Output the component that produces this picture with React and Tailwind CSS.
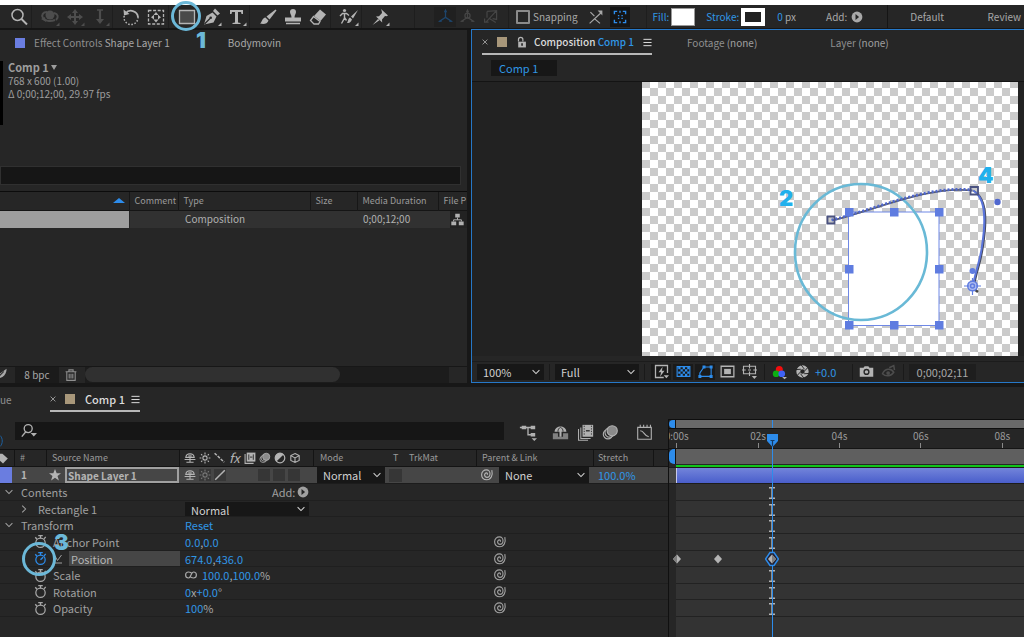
import React from "react";

const blue = "#2d8ceb";

/* ---------- icons ---------- */

function Icon({ size = 20, className = "", children, ...rest }) {
  return (
    <svg
      viewBox="0 0 20 20"
      width={size}
      height={size}
      fill="none"
      stroke="currentColor"
      strokeWidth="1.5"
      aria-hidden="true"
      className={"shrink-0 overflow-visible " + className}
      {...rest}
    >
      {children}
    </svg>
  );
}

const Corner = () => <path d="M19.500 15.500v3.500h-3.500z" fill="currentColor" stroke="none" />;

const ZoomIcon = () => (
  <Icon>
    <circle cx="8.500" cy="8" r="5.500" />
    <path d="M12.500 12l5.500 5.500" strokeWidth="2" />
  </Icon>
);
const OrbitIcon = () => (
  <Icon>
    <circle cx="10" cy="8" r="4.500" fill="currentColor" stroke="none" />
    <path d="M7 5C3 5 1 8 3 11c2 3 7 4 12 2M14 6c4 1 5 4 2 7" strokeWidth="2" />
    <path d="M1 12l5 3-1-5z" fill="currentColor" stroke="none" />
    <Corner />
  </Icon>
);
const PanIcon = () => (
  <Icon>
    <path d="M10 4v12M4 10h12" strokeWidth="2" />
    <path d="M10 2l3 4H7zM10 18l3-4H7zM2 10l4-3v6zM18 10l-4-3v6z" fill="currentColor" stroke="none" />
    <Corner />
  </Icon>
);
const DollyIcon = () => (
  <Icon>
    <path d="M10 3v10" strokeWidth="2.200" />
    <path d="M7 3h6" />
    <path d="M10 17l4-5H6z" fill="currentColor" stroke="none" />
    <Corner />
  </Icon>
);
const RotateIcon = () => (
  <Icon>
    <path d="M4.500 6.500A7 7 0 0 1 17 10" strokeWidth="1.800" />
    <path d="M17 10a7 7 0 1 1-13.500-2" strokeDasharray="1.500 1.700" />
    <path d="M2.500 2.500l.5 6 5.500-1.500z" fill="currentColor" stroke="none" />
  </Icon>
);
const AnchorIcon = () => (
  <Icon>
    <path d="M2.500 3.500h15v13.500h-15z" strokeDasharray="3 1.600" strokeWidth="1.300" />
    <path d="M10 5l2.500 3h-5zM10 15.500l2.500-3h-5zM5 10.200l3-2.400v4.800zM15 10.200l-3-2.400v4.800z" fill="currentColor" stroke="none" />
  </Icon>
);
const RectIcon = () => (
  <Icon>
    <path d="M2.500 3.500h15v13h-15z" fill="#4a4a4a" strokeWidth="1.300" />
    <Corner />
  </Icon>
);
const PenIcon = () => (
  <Icon>
    <path d="M2 17.500L4.500 9l6-3.500 4 4-3 6z" fill="currentColor" stroke="none" />
    <path d="M11 4l2-2.500 5 5-2.500 2z" fill="currentColor" stroke="none" />
    <path d="M2.500 17l5.500-5.500" stroke="#262626" strokeWidth="1.200" />
    <circle cx="8.700" cy="10.800" r="1.300" fill="#262626" stroke="none" />
    <Corner />
  </Icon>
);
const TypeIcon = () => (
  <Icon>
    <path d="M3 3h13v4h-1.500l-.5-2h-3v10.500l2.500.5v1h-8v-1l2.500-.5V5H5l-.5 2H3z" fill="currentColor" stroke="none" />
    <Corner />
  </Icon>
);
const BrushIcon = () => (
  <Icon>
    <path d="M17.500 2.500L8.500 9.500l3 3 7-9z" fill="currentColor" stroke="none" />
    <path d="M7.500 10.500l3 3c-1 3.500-5 4-8.500 3 2-1 2-5.500 5.500-6z" fill="currentColor" stroke="none" />
  </Icon>
);
const StampIcon = () => (
  <Icon>
    <path d="M7 5a3 3 0 1 1 6 0c0 2-1.500 3-1.500 5.500H18v4H2v-4h6.500C8.500 8 7 7 7 5zM3 15.800h14v1.400H3z" fill="currentColor" stroke="none" />
  </Icon>
);
const EraserIcon = () => (
  <Icon>
    <path d="M12 2.500l6 5-5.500 6.500-6.500-5z" fill="currentColor" stroke="none" />
    <path d="M5.500 9.500l6.500 5-1.500 2.500H6l-3.500-3.500z" strokeWidth="1.300" />
  </Icon>
);
const RotoIcon = () => (
  <Icon>
    <path d="M19 3l-7 6.500 2 2zM11 10.500l2 2c-1 3-3 3.500-5 3.500 1-1.500 1-4.500 3-5.500z" fill="currentColor" stroke="none" />
    <circle cx="5.500" cy="3.500" r="1.600" fill="currentColor" stroke="none" />
    <path d="M1 9l2.500-2.500h4l2.500 2M5.500 6.500v4.500l-3 5.500M5.500 10.500l2 3" strokeWidth="1.400" />
    <Corner />
  </Icon>
);
const PinIcon = () => (
  <Icon>
    <path d="M11 2l7 6.500-1.500.8-1.500-.3-3 3.500.2 3L6 9.500l3-.2L12 6l-.3-2zM8 12l1.500 1.300L2.500 18z" fill="currentColor" stroke="none" />
    <Corner />
  </Icon>
);
const AxisIcon = ({ ring }) => (
  <Icon size={17}>
    <path d="M10 3v8l-7 4.500M10 11l7 4.500" />
    <path d="M10 1l2 4H8zM1 16.500l4-3 .8 2.800zM19 16.500l-4-3-.8 2.800z" fill="currentColor" stroke="none" />
    {ring && <circle cx="10" cy="9" r="3" />}
  </Icon>
);
const ViewAxisIcon = () => (
  <Icon size={16}>
    <path d="M5 3l12-1v11l-5-1M16 3L4 16M5 3v8M2 12v4.500h5M8 12l8 5" />
  </Icon>
);
const SnapEdgeIcon = () => (
  <Icon size={16}>
    <path d="M3 4l5 5M2 18L16 5M8 12l7 6" />
    <path d="M12 2h6v6z" fill="currentColor" stroke="none" />
  </Icon>
);
const SnapBoxIcon = () => (
  <Icon size={14}>
    <path d="M2 6V2h4M14 2h4v4M18 14v4h-4M6 18H2v-4M7 8h2M12 8h2M7 12h2M12 12h2M10 1v3M10 16v3" strokeWidth="2" />
  </Icon>
);
const PlayIcon = () => (
  <Icon size={12}>
    <circle cx="10" cy="10" r="9" fill="currentColor" stroke="none" />
    <path d="M7.500 5l6 5-6 5z" fill="#262626" stroke="none" />
  </Icon>
);
const CloseIcon = () => (
  <Icon size={6}>
    <path d="M2 2l16 16M18 2L2 18" strokeWidth="3" />
  </Icon>
);
const MenuIcon = () => (
  <Icon size={9}>
    <path d="M1 3h18M1 10h18M1 17h18" strokeWidth="2.200" />
  </Icon>
);
const LockIcon = () => (
  <Icon size={11}>
    <path d="M4 8.500h14V19H4z" fill="currentColor" stroke="none" />
    <path d="M4.500 8V4.500a4 4 0 0 1 8 0V8" strokeWidth="2.200" />
    <path d="M11 11.500v4.500" stroke="#262626" strokeWidth="3" />
  </Icon>
);
const Chevron = ({ className = "", size = 8 }) => (
  <Icon size={size} className={className}>
    <path d="M1.500 5.500L10 14l8.500-8.500" strokeWidth="2.600" />
  </Icon>
);
const FlowIcon = () => (
  <Icon size={13}>
    <path d="M6.500 1h7v6h-7zM.5 13h7.500v6H.5zM12 13h7.500v6H12z" fill="currentColor" stroke="none" />
    <path d="M10 7v3.500M4 13v-2.500h12V13" />
  </Icon>
);
const FeatherIcon = () => (
  <Icon size={14}>
    <path d="M1 19L4 11 18 1c0 5-2 9-6 12-3 2-6 1-8 2z" fill="currentColor" stroke="none" />
    <path d="M4 15L14 5" stroke="#262626" />
  </Icon>
);
const TrashIcon = () => (
  <Icon size={12}>
    <path d="M1 4.500h18M6.500 4V1.500h7V4M3 5v14h14V5M7 8v8M10 8v8M13 8v8" strokeWidth="1.800" />
  </Icon>
);

/* viewer footer */
const FastIcon = () => (
  <Icon size={15}>
    <path d="M13 18H2V2h16v10" strokeWidth="1.700" />
    <path d="M11.500 3.500L6 11h3.500L8 17l6-8h-3.500zM13 15h7l-3.500 4z" fill="currentColor" stroke="none" />
  </Icon>
);
const GridIcon = () => (
  <Icon size={15}>
    <path d="M1.500 3.500h17v13h-17z" />
    <path d="M3 4h3v3H3zM9 4h3v3H9zM15 4h3v3h-3zM6 7h3v3H6zM12 7h3v3h-3zM3 10h3v3H3zM9 10h3v3H9zM15 10h3v3h-3zM6 13h3v3H6zM12 13h3v3h-3z" fill="currentColor" stroke="none" />
  </Icon>
);
const MaskIcon = () => (
  <Icon size={15}>
    <path d="M2.500 16.500V12L8 4h9.500v12.500z" />
    <path d="M.5 14.500h4v4h-4zM15.500 14.500h4v4h-4zM15.500 2h4v4h-4zM6 2h4v4H6z" fill="currentColor" stroke="none" />
  </Icon>
);
const RoiIcon = () => (
  <Icon size={15}>
    <path d="M1.500 3h17v14h-17z" strokeWidth="1.700" />
    <path d="M5.500 6.500h9v7h-9z" fill="currentColor" stroke="none" />
  </Icon>
);
const GuidesIcon = () => (
  <Icon size={15}>
    <path d="M2 3h16v10H2zM10 0v6M10 10v6M0 8h5M15 8h5M8 8h4" />
    <path d="M13 16h7l-3.500 4z" fill="currentColor" stroke="none" />
  </Icon>
);
const ChannelsIcon = () => (
  <Icon size={14}>
    <g stroke="none">
      <circle cx="9" cy="6.500" r="5" fill="#f20d0d" />
      <circle cx="4.500" cy="12.500" r="4.800" fill="#0cb012" />
      <circle cx="12.500" cy="12.500" r="4.800" fill="#3e62f5" />
      <path d="M13 17h7l-3.500 3.500z" fill="currentColor" />
    </g>
  </Icon>
);
const ApertureIcon = () => (
  <Icon size={13}>
    <circle cx="10" cy="10" r="6.500" strokeWidth="6" />
    <path d="M8 0l5 6.500M18 4l-4.500 5M20 13l-7.500.5M12 20l-5-6.500M2 16l4.500-5M0 7l7.500-.5" stroke="#262626" strokeWidth="1.500" />
  </Icon>
);
const CameraIcon = () => (
  <Icon size={15}>
    <path d="M1 5h5l1.500-2h5L14 5h5v12H1z" fill="currentColor" stroke="none" />
    <circle cx="10" cy="10.500" r="3.200" stroke="#262626" strokeWidth="1.800" />
  </Icon>
);
const ShowSnapIcon = () => (
  <Icon size={15}>
    <path d="M2 13c3-7 11-8 15-2-4 6-11 6-15 2z" strokeWidth="2" />
    <circle cx="9.500" cy="12" r="2.500" fill="currentColor" stroke="none" />
    <path d="M11 5l6-3 1 6" strokeWidth="2" />
  </Icon>
);

/* timeline */
const SearchIcon = () => (
  <Icon size={16}>
    <circle cx="9" cy="7" r="5" strokeWidth="1.700" />
    <path d="M6 11L1 17" strokeWidth="1.700" />
    <path d="M12 12.500h8l-4 4.500z" fill="currentColor" stroke="none" />
  </Icon>
);
const MiniFlowIcon = () => (
  <Icon size={18}>
    <path d="M1 5h10M10 5v8h4M10 5h4" />
    <path d="M3 3h5v4H3zM13 3h5v4h-5zM13 11h5v4h-5zM14 17h6l-3 3z" fill="currentColor" stroke="none" />
  </Icon>
);
const ShyAllIcon = () => (
  <Icon size={17}>
    <path d="M1 11h6v4h6v-4h6v7H1z" fill="#808080" stroke="none" />
    <path d="M3 9c1-8 13-8 14 0zM8.800 9h2.400v6H8.800z" fill="currentColor" stroke="none" />
    <path d="M7 9c0-3 1-4 3-5 2 1 3 2 3 5" stroke="#262626" strokeWidth="1" />
  </Icon>
);
const FramesIcon = () => (
  <Icon size={17}>
    <path d="M6.500 1H19v14H6.500z" fill="currentColor" stroke="none" />
    <path d="M4.500 4v13H16M1.800 6v13H13" strokeWidth="1.200" />
    <path d="M8.500 2v12M17 2v12" stroke="#262626" strokeDasharray="1.500 1.500" strokeWidth="1" />
    <path d="M10.500 8h4.500" stroke="#262626" />
  </Icon>
);
const BlurIcon = ({ size = 17 }) => (
  <Icon size={size}>
    <circle cx="7" cy="12" r="5.500" strokeWidth="1.300" />
    <circle cx="9" cy="10" r="5.500" fill="#262626" strokeWidth="1.300" />
    <circle cx="12" cy="8" r="6" fill="#8a8a8a" strokeWidth="1.300" />
  </Icon>
);
const GraphIcon = () => (
  <Icon size={17}>
    <path d="M2 4h16v14H2zM5 8c5 0 4 6 10 7M5 1v3M9 1v3M13 1v3M17 1v3" strokeWidth="1.300" />
  </Icon>
);
const TagIcon = () => (
  <Icon size={12}>
    <path d="M0 3h9l9 8-8 8L0 10z" fill="currentColor" stroke="none" />
  </Icon>
);
const ShyIcon = () => (
  <Icon size={12}>
    <path d="M3 9C4 1 16 1 17 9zM10 9v9M1 12.500h18M4 17h12" strokeWidth="1.800" />
    <path d="M8.500 9V4M11.500 9V4" strokeWidth="1.800" />
  </Icon>
);
const SunIcon = () => (
  <Icon size={12}>
    <circle cx="10" cy="10" r="3.500" strokeWidth="1.800" />
    <path d="M10 1v3M10 16v3M1 10h3M16 10h3M3.500 3.500l2 2M14.500 14.500l2 2M16.500 3.500l-2 2M3.500 16.500l2-2" strokeWidth="1.800" />
  </Icon>
);
const DashIcon = () => (
  <Icon size={12}>
    <path d="M1 2l16 15" strokeWidth="2.500" strokeDasharray="5 2" />
  </Icon>
);
const SlashIcon = () => (
  <Icon size={12}>
    <path d="M2 18L18 2" strokeWidth="2.500" />
  </Icon>
);
const BlendIcon = () => (
  <Icon size={12}>
    <path d="M4.500 1H19v15H4.500z" fill="currentColor" stroke="none" />
    <path d="M1.800 3.500V19H16" strokeWidth="1.800" />
    <path d="M8 4v9M15.500 4v9M10 8.500h4" stroke="#262626" strokeWidth="1.500" />
  </Icon>
);
const AdjustIcon = () => (
  <Icon size={12}>
    <circle cx="10" cy="10" r="8" strokeWidth="2" />
    <path d="M16 4A8.500 8.500 0 0 0 4 16z" fill="currentColor" stroke="none" />
  </Icon>
);
const CubeIcon = () => (
  <Icon size={12}>
    <path d="M10 2.500l7 3.500v8l-7 3.500L3 14V6zM3 6l7 4 7-4M10 10v7.500" strokeWidth="1.800" />
  </Icon>
);
const StarIcon = () => (
  <Icon size={12}>
    <path d="M10 0l2.800 7H20l-5.800 4.500L16.500 19 10 14.500 3.500 19l2.300-7.500L0 7h7.200z" fill="currentColor" stroke="none" />
  </Icon>
);
const SwirlIcon = () => (
  <Icon size={12}>
    <path d="M18 2c2 8-1 16-8.500 16C4 18 1 14 1 9.500 1 4.500 5 1.500 9 1.500c4 0 6 3 6 6.500 0 3.500-2 6-5 6-2.500 0-4-2-4-4s1.300-3.500 3-3.500 2 1.500 1.500 3" strokeWidth="1.900" />
  </Icon>
);
const StopwatchIcon = ({ on }) => (
  <Icon size={13}>
    <circle cx="10" cy="12" r="7.200" strokeWidth="1.900" />
    <path d="M6.500 1h7M10 1v4M2 3.500l2.500 3M18 3l-2.500 3" strokeWidth="2" />
    {on && <path d="M10 12l4-4" strokeWidth="2.200" />}
  </Icon>
);
const PropGraphIcon = () => (
  <Icon size={10}>
    <path d="M0 4h4l5 9 8-11M0 18h18" strokeWidth="2" />
  </Icon>
);
const LinkIcon = () => (
  <Icon size={12}>
    <path d="M12 8c-2-3-4-3-6-3-3 0-5 2-5 5s2 5 5 5c4 0 4-10 8-10 3 0 5 2 5 5s-2 5-5 5c-2 0-4 0-6-3" strokeWidth="2" />
  </Icon>
);

/* ---------- controls ---------- */

function Tool({ label, dim, children }) {
  return (
    <button
      type="button"
      aria-label={label}
      className={"flex h-full w-[25px] shrink-0 items-center justify-center " + (dim ? "text-[#4d4d4d]" : "text-[#b4b4b4]")}
    >
      {children}
    </button>
  );
}
const Sep = () => <span className="h-full w-[6px] shrink-0 border-l border-[#1e1e1e]" />;

function Select({ label, value, className = "" }) {
  return (
    <span className={"relative flex items-center bg-[#171717] text-[#d0d0d0] " + className}>
      <select aria-label={label} defaultValue={value} className="h-full w-full appearance-none bg-transparent pl-[6px] text-[11px] leading-4 outline-none">
        <option>{value}</option>
      </select>
      <Chevron className="pointer-events-none absolute right-1" />
    </span>
  );
}

const Badge = ({ className, children }) => (
  <span className={"pointer-events-none absolute font-['Inter',sans-serif] text-[22px] leading-5 font-black " + className}>{children}</span>
);

/* ---------- top toolbar ---------- */

function Toolbar() {
  return (
    <header className="flex h-[25px] shrink-0 items-center border-b-2 border-[#151515] bg-[#262626] whitespace-nowrap">
      <span className="w-[6px] shrink-0" />
      <Tool label="Zoom"><ZoomIcon /></Tool>
      <Sep />
      <Tool label="Orbit camera" dim><OrbitIcon /></Tool>
      <Tool label="Pan camera" dim><PanIcon /></Tool>
      <Tool label="Dolly camera" dim><DollyIcon /></Tool>
      <Sep />
      <Tool label="Rotate"><RotateIcon /></Tool>
      <Tool label="Anchor point"><AnchorIcon /></Tool>
      <Sep />
      <span className="relative flex h-full">
        <Tool label="Rectangle"><RectIcon /></Tool>
        <span className="pointer-events-none absolute -top-1 -left-[3px] size-[30px] rounded-full border-[3px] border-[#6cb8d8]" />
        <Badge className="top-[25px] left-[22px] text-[#6cb8d8]">1</Badge>
      </span>
      <Tool label="Pen"><PenIcon /></Tool>
      <Tool label="Type"><TypeIcon /></Tool>
      <Sep />
      <Tool label="Brush"><BrushIcon /></Tool>
      <Tool label="Clone stamp"><StampIcon /></Tool>
      <Tool label="Eraser"><EraserIcon /></Tool>
      <Sep />
      <Tool label="Roto brush"><RotoIcon /></Tool>
      <Sep />
      <Tool label="Puppet pin"><PinIcon /></Tool>
      <span className="ml-[22px] h-full w-[20px] border-l border-[#1e1e1e]" />
      <button type="button" aria-label="Local axis" className="flex h-5 w-[22px] items-center justify-center bg-[#202020] text-[#1d456c]"><AxisIcon /></button>
      <button type="button" aria-label="World axis" className="flex h-5 w-[23px] items-center justify-center text-[#454545]"><AxisIcon ring /></button>
      <button type="button" aria-label="View axis" className="flex h-5 w-[23px] items-center justify-center text-[#454545]"><ViewAxisIcon /></button>
      <span className="ml-[6px] h-full w-[8px] border-l border-[#1e1e1e]" />
      <label className="flex items-center gap-[3px] text-[#a8a8a8]">
        <input type="checkbox" className="size-[14px] appearance-none rounded-[1px] border-2 border-[#8a8a8a]" />
        Snapping
      </label>
      <button type="button" aria-label="Snap to edges" className="ml-2 flex w-5 justify-center text-[#a8a8a8]"><SnapEdgeIcon /></button>
      <button type="button" aria-label="Snap to features" className="ml-1 flex size-5 items-center justify-center bg-[#151515] text-[#2d8ceb]"><SnapBoxIcon /></button>
      <span className="ml-4 h-full w-[7px] border-l border-[#1e1e1e]" />
      <button type="button" className="text-[#3097e6]">Fill:</button>
      <button type="button" aria-label="Fill colour" className="ml-[2px] h-[18px] w-6 border border-[#9a9a9a] bg-white" />
      <button type="button" className="ml-[11px] text-[#3097e6]">Stroke:</button>
      <button type="button" aria-label="Stroke colour" className="ml-[2px] h-[18px] w-6 border-4 border-white bg-[#222]" />
      <span className="ml-3 text-[#a8a8a8]"><span className="text-[#3097e6]">0</span> px</span>
      <button type="button" className="ml-[30px] flex items-center gap-1 text-[#a8a8a8]">Add: <PlayIcon /></button>
      <span className="ml-6 h-full w-[23px] border-l border-[#151515]" />
      <button type="button" className="text-[#a8a8a8]">Default</button>
      <button type="button" className="ml-auto pr-[3px] text-[#a8a8a8]">Review</button>
    </header>
  );
}

/* ---------- project panel ---------- */

function ProjectPanel() {
  return (
    <section className="flex min-w-0 flex-col overflow-hidden bg-[#262626]">
      <div className="flex h-[26px] items-center pl-[15px] whitespace-nowrap">
        <span className="size-[10px] bg-[#6a7de0]" />
        <span className="ml-[9px] text-[#8f8f8f]">Effect Controls <span className="text-[#a8a8a8]">Shape Layer 1</span></span>
        <span className="ml-[58px] text-[#a8a8a8]">Bodymovin</span>
      </div>
      <div className="mt-[5px] flex h-[64px] gap-[5px]">
        <span className="w-[3px] bg-black" />
        <div className="leading-[13px] text-[#9d9d9d]">
          <button type="button" className="flex items-center gap-[2px] text-[11px] font-semibold">
            Comp 1
            <svg viewBox="0 0 6 5" width="6" height="5" aria-hidden="true"><path d="M0 0h6L3 5z" fill="currentColor" /></svg>
          </button>
          <p>768 x 600 (1.00)</p>
          <p>Δ 0;00;12;00, 29.97 fps</p>
        </div>
      </div>
      <input aria-label="Search project" className="mt-[41px] mr-[6px] h-[19px] border border-[#303030] bg-[#161616] outline-none" />
      <div className="mt-[6px] flex border-t border-[#0c0c0c]">
        <table className="w-full table-fixed border-collapse text-left">
          <colgroup>
            <col className="w-[129px]" /><col className="w-[49px]" /><col /><col className="w-[47px]" />
            <col className="w-[81px]" /><col className="w-[29px]" />
          </colgroup>
          <thead className="h-[18px] border-b border-[#151515] text-[9px] leading-4 text-[#9a9a9a]">
            <tr>
              <th aria-label="Name">
                <svg viewBox="0 0 12 5" width="12" height="5" className="mr-1 ml-auto" aria-hidden="true"><path d="M0 5h12L6 0z" fill={blue} /></svg>
              </th>
              {["Comment", "Type", "Size", "Media Duration", "File P"].map((h) => (
                <th key={h} className="border-l border-[#171717] p-0 pl-[5px] font-normal whitespace-nowrap">{h}</th>
              ))}
            </tr>
          </thead>
          <tbody className="leading-4 text-[#b0b0b0]">
            <tr className="h-[18px] bg-[#313131]">
              <td className="border-r border-[#262626] bg-[#9e9e9e] p-0" />
              <td className="p-0" />
              <td className="p-0 pl-[7px]">Composition</td>
              <td className="p-0" />
              <td className="p-0 pl-[6px]">0;00;12;00</td>
              <td className="bg-[linear-gradient(90deg,#313131_12px,#222_12px)] p-0 pl-[13px]"><FlowIcon /></td>
            </tr>
          </tbody>
        </table>
      </div>
      <div className="flex-1" />
      <footer className="flex h-[17px] items-center border-t border-[#171717] text-[#a8a8a8]">
        <span className="-ml-[6px]"><FeatherIcon /></span>
        <button type="button" className="ml-[7px] h-full w-[44px] bg-[#1b1b1b] leading-4">8 bpc</button>
        <button type="button" aria-label="Delete" className="ml-[6px] text-[#8f8f8f]"><TrashIcon /></button>
        <span className="ml-2 flex h-full flex-1 bg-[#1c1c1c]"><span className="h-[15px] w-[70%] rounded-full bg-[#303030]" /></span>
        <span className="h-full w-[18px]" />
      </footer>
    </section>
  );
}

/* ---------- composition viewer ---------- */

function Handle({ x, y }) {
  return <rect x={x - 4} y={y - 4} width="8.500" height="8.500" fill="#5f7ce0" />;
}

function Stage() {
  const arc = "M189.500 138C235 127 285 103 330 108";
  const drop = "M331 108.500C346 117 343 145 340 164C338 180 333 190 331 204";
  const handles = [[207, 130], [252, 130], [297, 130], [207, 187], [297, 187], [207, 243], [252, 243], [297, 243]];
  return (
    <div className="relative h-[274px] flex-1 overflow-hidden bg-[conic-gradient(#fff_25%,#cbcbcb_0_50%,#fff_0_75%,#cbcbcb_0)] bg-[length:16px_16px] bg-[position:0_-2px]">
      <svg viewBox="0 0 376 274" width="376" height="274" fill="none" role="img" aria-label="Rectangle shape with a motion path">
        <rect x="206.500" y="130" width="90.500" height="113.500" fill="#fff" stroke="#6f88e6" />
        <ellipse cx="219" cy="170" rx="66" ry="68" stroke="#69b9d6" strokeWidth="2.600" />
        <path d={arc} stroke="#555a70" strokeWidth="1.600" transform="translate(.5 .5)" />
        <path d={arc} stroke="#5068cf" strokeWidth="2.800" strokeDasharray="2 2" />
        <path d={drop} stroke="#44485a" strokeWidth="1.800" transform="translate(1 .5)" />
        <path d={drop} stroke="#5a74da" strokeWidth="2" />
        {handles.map(([x, y]) => <Handle key={x + "-" + y} x={x} y={y} />)}
        <g stroke="#4a5280" strokeWidth="1.800">
          <path d="M185.500 134.500h7v7h-7zM328.500 105h7.500v7.500h-7.500z" />
        </g>
        <circle cx="355.500" cy="120" r="3.200" fill="#5068cf" />
        <circle cx="330.500" cy="189" r="3" fill="#5f7ce0" />
        <path d="M332 207l4 3" stroke="#444" strokeWidth="2.500" />
        <g stroke="#5f7ce0" strokeWidth="1.500">
          <circle cx="330.500" cy="204" r="4.800" fill="#aebcf0" />
          <circle cx="330.500" cy="204" r="2" />
          <path d="M330.500 196v4M330.500 208v5M322 204h5M334 204h5" strokeWidth="1.200" />
        </g>
      </svg>
      <Badge className="top-[106px] left-[137px] text-[#22b0ec]">2</Badge>
      <Badge className="top-[83px] left-[336px] text-[#22b0ec]">4</Badge>
    </div>
  );
}

const BarBtn = ({ label, className = "", children }) => (
  <button type="button" aria-label={label} className={"flex h-4 w-5 shrink-0 items-center justify-center " + className}>{children}</button>
);
const BarSep = ({ className = "" }) => <span className={"h-4 w-px shrink-0 bg-[#1a1a1a] " + className} />;

function Viewer() {
  return (
    <section className="-mt-px flex min-w-0 flex-col overflow-hidden border-y border-l border-[#2678c8] bg-[#262626] whitespace-nowrap">
      <div className="flex h-[25px] items-end pl-[10px]">
        <div className="flex h-6 w-[170px] items-center border-b-2 border-[#b8b8b8] text-[#dcdcdc]">
          <button type="button" aria-label="Close" className="text-[#a0a0a0]"><CloseIcon /></button>
          <span className="ml-[9px] size-[10px] shrink-0 bg-[#a8977a]" />
          <span className="ml-[9px] text-[#b4b4b4]"><LockIcon /></span>
          <span className="ml-[7px] font-medium">Composition <span className="text-[#3097e6]">Comp 1</span></span>
          <button type="button" aria-label="Panel menu" className="ml-auto"><MenuIcon /></button>
        </div>
        <span className="ml-[35px] leading-6 text-[#8f8f8f]">Footage <span className="text-[#a0a0a0]">(none)</span></span>
        <span className="ml-[73px] leading-6 text-[#8f8f8f]">Layer <span className="text-[#a0a0a0]">(none)</span></span>
      </div>
      <div className="flex h-[27px] items-center border-b border-[#141414] pl-[19px]">
        <button type="button" className="h-4 w-[66px] bg-[#171717] pl-2 text-left text-[11px] leading-4 text-[#3097e6]">Comp 1</button>
      </div>
      <div className="flex bg-[#222] pr-[6px] pl-[170px]">
        <Stage />
      </div>
      <div className="mt-[5px] flex h-5 items-center border-t border-[#1c1c1c] text-[#b4b4b4]">
        <Select label="Magnification" value="100%" className="ml-[5px] h-4 w-[67px]" />
        <BarSep className="mx-[5px]" />
        <Select label="Resolution" value="Full" className="h-4 w-[84px]" />
        <BarSep className="mx-[5px]" />
        <div className="ml-px flex gap-[2px]">
          <BarBtn label="Fast previews" className="bg-[#1a1a1a]"><FastIcon /></BarBtn>
          <BarBtn label="Transparency grid" className="bg-[#1a1a1a] text-[#2d8ceb]"><GridIcon /></BarBtn>
          <BarBtn label="Mask visibility" className="bg-[#1a1a1a] text-[#2d8ceb]"><MaskIcon /></BarBtn>
          <BarBtn label="Region of interest"><RoiIcon /></BarBtn>
          <BarBtn label="Guides"><GuidesIcon /></BarBtn>
        </div>
        <BarSep className="mx-[5px]" />
        <div className="flex gap-[2px]">
          <BarBtn label="Channels"><ChannelsIcon /></BarBtn>
          <BarBtn label="Reset exposure"><ApertureIcon /></BarBtn>
        </div>
        <button type="button" className="ml-[3px] w-[34px] text-left text-[11px] text-[#3097e6]">+0.0</button>
        <BarSep className="mx-[3px]" />
        <div className="flex gap-[2px]">
          <BarBtn label="Snapshot"><CameraIcon /></BarBtn>
          <BarBtn label="Show snapshot" className="text-[#4d4d4d]"><ShowSnapIcon /></BarBtn>
        </div>
        <BarSep className="mx-[5px]" />
        <button type="button" className="h-4 w-[67px] bg-[#1e1e1e] text-[11px] leading-4 text-[#a8a8a8]">0;00;02;11</button>
      </div>
    </section>
  );
}

/* ---------- timeline ---------- */

const cols = "grid grid-cols-[14px_32px_133px_134px_163px_117px_60px_15px]";

function HeaderCell({ className = "", children }) {
  return <span className={"flex h-full items-center border-[#141414] " + className}>{children}</span>;
}

function ColumnHeader() {
  return (
    <div className={cols + " h-[17px] items-center border-b border-[#141414] text-[9px] leading-4 text-[#9a9a9a]"}>
      <HeaderCell className="-ml-[3px] text-[#b4b4b4]"><TagIcon /></HeaderCell>
      <HeaderCell className="border-l pl-[5px]">#</HeaderCell>
      <HeaderCell className="border-l pl-[5px]">Source Name</HeaderCell>
      <HeaderCell className="gap-[3px] border-l pl-1 text-[#b4b4b4]">
        <ShyIcon /><SunIcon /><DashIcon />
        <span className="w-3 text-[13px] leading-4 italic">fx</span>
        <BlendIcon /><BlurIcon size={12} /><AdjustIcon /><CubeIcon />
      </HeaderCell>
      <HeaderCell className="border-l pl-[6px]">
        <span className="w-[73px]">Mode</span><span className="w-4">T</span><span>TrkMat</span>
      </HeaderCell>
      <HeaderCell className="border-l pl-[5px]">Parent &amp; Link</HeaderCell>
      <HeaderCell className="border-l pl-1">Stretch</HeaderCell>
      <HeaderCell className="border-l" />
    </div>
  );
}

function LayerRow() {
  return (
    <div className={cols + " h-[17px] items-center border-b border-[#1c1c1c] bg-[#464646] text-[11px] leading-4 text-[#b4b4b4]"}>
      <span className="h-4 w-3 bg-[#6a7de0]" />
      <span className="pl-[7px] text-[10px] font-semibold">1</span>
      <span className="flex h-4 items-center gap-1 pl-[3px]">
        <StarIcon />
        <input aria-label="Layer name" defaultValue="Shape Layer 1" className="h-4 w-full min-w-0 border-2 border-[#a0a0a0] bg-[#464646] pl-[1px] text-[10px] leading-3 font-semibold outline-none" />
      </span>
      <span className="flex h-4 items-center gap-[3px] pl-[5px]">
        <ShyIcon />
        <span className="bg-[#383838] text-[#777]"><SunIcon /></span>
        <span className="bg-[#383838]"><SlashIcon /></span>
        <span className="ml-[29px] size-3 bg-[#363636]" />
        <span className="size-3 bg-[#363636]" />
        <span className="size-3 bg-[#363636]" />
      </span>
      <span className="flex h-4 items-center bg-[#464646] pl-1">
        <Select label="Blending mode" value="Normal" className="h-4 w-[68px]" />
        <input type="checkbox" aria-label="Preserve transparency" className="ml-1 size-[13px] appearance-none bg-[#363636]" />
      </span>
      <span className="flex h-4 items-center justify-between pr-1 pl-[5px]">
        <button type="button" aria-label="Parent pick whip"><SwirlIcon /></button>
        <Select label="Parent" value="None" className="h-4 w-[90px]" />
      </span>
      <span className="pl-[5px] text-[#3097e6]">100.0%</span>
    </div>
  );
}

function Toggle({ open, label, indent = "pl-[5px]", gap = "gap-2" }) {
  return (
    <button type="button" aria-expanded={open} className={"flex items-center " + indent + " " + gap}>
      <Chevron className={open ? "" : "-rotate-90"} />
      {label}
    </button>
  );
}

function PropRow({ label, on, children }) {
  return (
    <div className="grid grid-cols-[180px_314px_1fr] items-center border-b border-[#1f1f1f]">
      <span className="flex h-full items-center pl-[34px]">
        <span className="relative flex w-[19px]">
          <button type="button" aria-label={label + " stopwatch"} className={on ? "text-[#2d8ceb]" : "text-[#a8a8a8]"}><StopwatchIcon on={on} /></button>
          {on && (
            <>
              <span className="pointer-events-none absolute -top-[10px] -left-[12px] z-10 size-[34px] rounded-full border-[3px] border-[#6cb8d8]" />
              <Badge className="-top-[20px] left-5 z-10 text-[#6cb8d8]">3</Badge>
            </>
          )}
        </span>
        {on ? (
          <>
            <span className="w-4"><PropGraphIcon /></span>
            <span className="flex h-[15px] flex-1 items-center bg-[#464646] pl-[2px] text-[#b4b4b4]">{label}</span>
          </>
        ) : label}
      </span>
      <span className="pl-[5px] text-[#3097e6]">{children}</span>
      <button type="button" aria-label={label + " pick whip"} className="w-3 text-[#a0a0a0]"><SwirlIcon /></button>
    </div>
  );
}

const Unit = ({ children }) => <span className="text-[#a8a8a8]">{children}</span>;

function LayerTree() {
  return (
    <div className="grid h-[133px] grid-rows-8 text-[11px] leading-4 text-[#a0a0a0]">
      <div className="grid grid-cols-[272px_1fr] items-center border-b border-[#1f1f1f]">
        <Toggle open label="Contents" />
        <button type="button" className="flex items-center gap-[2px]">Add: <PlayIcon /></button>
      </div>
      <div className="grid grid-cols-[185px_1fr] items-center border-b border-[#1f1f1f]">
        <Toggle open={false} label="Rectangle 1" indent="pl-5" gap="gap-[10px]" />
        <Select label="Group blending mode" value="Normal" className="h-[14px] w-[124px]" />
      </div>
      <div className="grid grid-cols-[185px_1fr] items-center border-b border-[#1f1f1f]">
        <Toggle open label="Transform" />
        <button type="button" className="text-left text-[#3097e6]">Reset</button>
      </div>
      <PropRow label="Anchor Point">0.0<Unit>,</Unit>0.0</PropRow>
      <PropRow label="Position" on>674.0<Unit>,</Unit>436.0</PropRow>
      <PropRow label="Scale">
        <span className="flex items-center gap-[5px]">
          <span className="text-[#a8a8a8]"><LinkIcon /></span>
          <span>100.0<Unit>,</Unit>100.0<Unit>%</Unit></span>
        </span>
      </PropRow>
      <PropRow label="Rotation">0<Unit>x</Unit>+0.0<Unit>°</Unit></PropRow>
      <PropRow label="Opacity">100<Unit>%</Unit></PropRow>
    </div>
  );
}

function Keyframe({ className, selected, half }) {
  return (
    <svg viewBox="0 0 14 16" width="14" height="16" className={"absolute " + className} aria-hidden="true">
      {selected && <path d="M5 1.500h4L13.500 8 9 14.500H5L.5 8z" fill="#223" stroke={blue} strokeWidth="1.500" />}
      <path d="M7 3.500L11 8l-4 4.500L3 8z" fill="#b4b4b4" />
      {half === "left" && <path d="M7 3.500v9L3 8z" fill="#7d7d7d" />}
      {half === "right" && <path d="M7 3.500v9L11 8z" fill="#7d7d7d" />}
    </svg>
  );
}

const IBeam = () => (
  <svg viewBox="0 0 8 12" width="8" height="12" className="absolute top-[3px] left-[99px]" aria-hidden="true">
    <path d="M1 .7h6M1 11.300h6M4 1v10" stroke="#b4b4b4" strokeWidth="1.400" />
  </svg>
);

function TimeGraph() {
  return (
    <div className="relative flex min-w-0 flex-1 flex-col overflow-hidden border-l border-[#101010] bg-[#262626]">
      <div className="flex h-[10px] shrink-0 border-y border-[#0e0e0e]">
        <span className="w-[7px] rounded-l-full border-r border-[#111] bg-[#2d8ceb]" />
        <span className="flex-1 bg-[#696969]" />
      </div>
      <div className="-ml-[33px] grid h-[19px] w-[407px] shrink-0 grid-cols-5 text-center text-[#9a9a9a]">
        {["0:00s", "02s", "04s", "06s", "08s"].map((t) => (
          <span key={t} className="flex flex-col items-center leading-[14px]">{t}<span className="h-[5px] w-px bg-[#8a8a8a]" /></span>
        ))}
      </div>
      <div className="flex h-4 shrink-0 border-t border-[#151515] bg-[#262626]">
        <span className="w-[7px] rounded-l-[5px] border-r border-[#111] bg-[#2d8ceb]" />
        <span className="flex-1 bg-[#5f5f5f]" />
      </div>
      <div className="mt-px ml-[7px] h-[2px] shrink-0 bg-[#10c41a]" />
      <div className="flex h-[17px] shrink-0 border-y border-[#1c1c1c] bg-[#464646] pl-[7px]">
        <span className="flex-1 border-l border-[#c8c8e8] bg-gradient-to-b from-[#7384da] to-[#4a5ecb]" />
      </div>
      <div className="ml-[7px] flex flex-1 flex-col bg-[#333]">
        <div className="grid h-[133px] grid-rows-8">
          {Array.from({ length: 8 }, (_, i) => (
            <div key={i} className="border-b border-[#222]">
              <div className="relative -ml-[7px]">
                {i !== 4 && <IBeam />}
                {i === 4 && (
                  <>
                    <Keyframe className="left-px" half="left" />
                    <Keyframe className="left-[42px]" />
                    <Keyframe className="left-[96px] z-10" half="right" selected />
                  </>
                )}
              </div>
            </div>
          ))}
        </div>
      </div>
      <span className="absolute top-[28px] bottom-0 left-[103px] w-px bg-[#2d8ceb]" />
      <span className="absolute top-px left-[103px] h-2 w-px bg-[#2d8ceb]" />
      <svg viewBox="0 0 11 13" width="11" height="13" className="absolute top-[15px] left-[98px]" aria-hidden="true">
        <path d="M0 0h11v7l-5.500 6L0 7z" fill={blue} />
        <path d="M3.500 6.500h4M5.500 6.500V12" stroke="#153a63" strokeWidth="1.200" />
      </svg>
    </div>
  );
}

function Timeline() {
  return (
    <section className="flex flex-1 flex-col border-t-4 border-[#171717] bg-[#262626]">
      <div className="flex h-[25px] items-end whitespace-nowrap">
        <button type="button" className="w-[50px] text-left leading-6 text-[#8f8f8f]">ue</button>
        <div className="flex h-6 w-[90px] items-center border-b-2 border-[#b8b8b8] text-[#dcdcdc]">
          <button type="button" aria-label="Close" className="text-[#a0a0a0]"><CloseIcon /></button>
          <span className="ml-[9px] size-[10px] shrink-0 bg-[#a8977a]" />
          <span className="ml-[10px] text-[11px] font-medium">Comp 1</span>
          <button type="button" aria-label="Panel menu" className="ml-auto"><MenuIcon /></button>
        </div>
      </div>
      <div className="mt-[7px] flex flex-1">
        <div className="w-[668px] shrink-0">
          <div className="flex h-[31px] items-start border-b border-[#101010] text-[#b0b0b0]">
            <svg viewBox="0 0 3 12" width="3" height="12" className="mt-4" aria-hidden="true"><path d="M0 .5C3 3 3 9 0 11.500" fill="none" stroke="#1d5f9e" /></svg>
            <label className="mt-[3px] ml-3 flex h-[18px] w-[489px] items-center bg-[#161616] pl-[6px]">
              <SearchIcon />
              <input aria-label="Search layers" className="min-w-0 flex-1 bg-transparent outline-none" />
            </label>
            <div className="mt-1 ml-[15px] flex">
              <button type="button" aria-label="Mini flowchart"><MiniFlowIcon /></button>
              <button type="button" aria-label="Hide shy layers" className="ml-[15px]"><ShyAllIcon /></button>
              <button type="button" aria-label="Frame blending" className="ml-2"><FramesIcon /></button>
              <button type="button" aria-label="Motion blur" className="ml-2"><BlurIcon /></button>
              <button type="button" aria-label="Graph editor" className="ml-[17px]"><GraphIcon /></button>
            </div>
          </div>
          <ColumnHeader />
          <LayerRow />
          <LayerTree />
        </div>
        <TimeGraph />
      </div>
    </section>
  );
}

export default function App() {
  return (
    <div className="flex min-h-screen flex-col border-t-[5px] border-white bg-[#171717] font-['Noto_Sans_CJK_SC','Noto_Sans',sans-serif] text-[10px] leading-4">
      <Toolbar />
      <main className="grid h-[353px] shrink-0 grid-cols-[minmax(0,467fr)_minmax(0,553fr)] gap-1">
        <ProjectPanel />
        <Viewer />
      </main>
      <Timeline />
    </div>
  );
}
